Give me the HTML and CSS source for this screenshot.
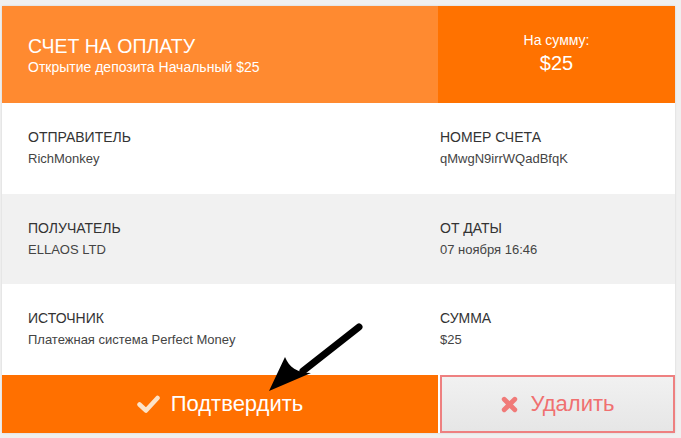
FILE: index.html
```html
<!DOCTYPE html>
<html lang="ru">
<head>
<meta charset="utf-8">
<link rel="stylesheet" href="styles.css">
</head>
<body>
<div class="card">
  <div class="head">
    <div class="head-main">
      <div class="title">СЧЕТ НА ОПЛАТУ</div>
      <div class="subtitle">Открытие депозита Начальный $25</div>
    </div>
    <div class="head-sum">
      <div class="sum-label">На сумму:</div>
      <div class="sum-value">$25</div>
    </div>
  </div>
  <div class="row">
    <div class="cell main"><div class="label">ОТПРАВИТЕЛЬ</div><div class="value">RichMonkey</div></div>
    <div class="cell side"><div class="label">НОМЕР СЧЕТА</div><div class="value">qMwgN9irrWQadBfqK</div></div>
  </div>
  <div class="row alt">
    <div class="cell main"><div class="label">ПОЛУЧАТЕЛЬ</div><div class="value">ELLAOS LTD</div></div>
    <div class="cell side"><div class="label">ОТ ДАТЫ</div><div class="value">07 ноября 16:46</div></div>
  </div>
  <div class="row">
    <div class="cell main"><div class="label">ИСТОЧНИК</div><div class="value">Платежная система Perfect Money</div></div>
    <div class="cell side"><div class="label">СУММА</div><div class="value">$25</div></div>
  </div>
  <div class="actions">
    <div class="btn confirm">
      <svg class="ico" width="23" height="18" viewBox="0 0 23 18"><path d="M2.5 9.5 L9 15.5 L20.5 3" fill="none" stroke="#fde3c8" stroke-width="4.5" stroke-linecap="round" stroke-linejoin="round"/></svg>
      <span>Подтвердить</span>
    </div>
    <div class="btn delete">
      <svg class="ico" width="17" height="17" viewBox="0 0 16 16"><path d="M3 3 L13 13 M13 3 L3 13" fill="none" stroke="#f07a78" stroke-width="4.5" stroke-linecap="round"/></svg>
      <span>Удалить</span>
    </div>
  </div>
  <svg class="arrow" width="100" height="80" viewBox="0 0 100 80">
    <path d="M92 6 L36 50" stroke="#000" stroke-width="7" stroke-linecap="round"/>
    <path d="M2 70 L18 36 C22 46 30 52 44 52 Z" fill="#000"/>
  </svg>
</div>
</body>
</html>
```

FILE: styles.css
```css
html, body { margin: 0; padding: 0; }
body {
  background: #f0f0f0;
  font-family: "Liberation Sans", Arial, sans-serif;
  width: 681px;
  height: 438px;
  overflow: hidden;
}
.card {
  position: relative;
  margin: 6px 0 0 2px;
  width: 673px;
  background: #fff;
  box-shadow: 0 0 2px rgba(0,0,0,0.12);
}
.head {
  display: flex;
  height: 97px;
  color: #fff;
}
.head-main {
  width: 436px;
  background: #ff8a30;
  box-sizing: border-box;
  padding: 28px 0 0 26px;
}
.title { font-size: 19.5px; line-height: 24px; }
.subtitle { font-size: 14px; line-height: 16px; margin-top: 1px; }
.head-sum {
  flex: 1;
  background: #ff7200;
  text-align: center;
  padding-top: 25px;
  box-sizing: border-box;
}
.sum-label { font-size: 14px; line-height: 18px; }
.sum-value { font-size: 20px; line-height: 24px; margin-top: 2px; }
.row {
  display: flex;
  height: 91px;
  box-sizing: border-box;
  padding-top: 26px;
}
.row.alt { background: #f1f1f1; height: 90px; }
.cell.main { width: 412px; padding-left: 26px; }
.cell.side { flex: 1; padding-left: 0; }
.label { font-size: 14px; line-height: 17px; color: #333; }
.value { font-size: 13px; line-height: 16px; color: #444; margin-top: 5px; }
.actions { display: flex; height: 58px; }
.btn {
  display: flex;
  align-items: center;
  justify-content: center;
  gap: 11px;
  font-size: 22px;
  box-sizing: border-box;
}
.confirm {
  width: 436px;
  background: #ff7000;
  color: #fff;
}
.delete {
  flex: 1;
  margin-left: 2px;
  background: linear-gradient(#f1f1f1, #e6e6e6);
  border: 2px solid #ee8080;
  color: #f07070;
}
.delete .ico { margin-right: 2px; }
.arrow {
  position: absolute;
  left: 265px;
  top: 315px;
}
```
